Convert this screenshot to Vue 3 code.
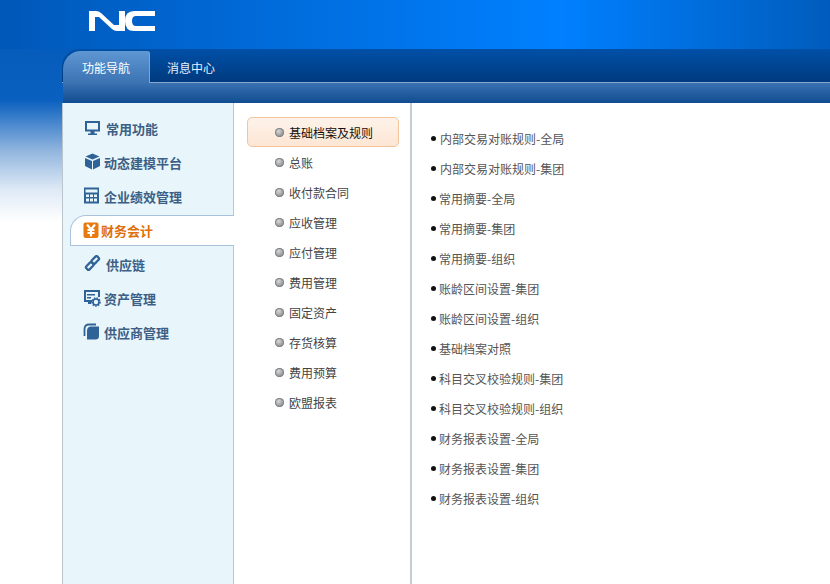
<script setup>
const navItems = [
  { key: 'monitor', label: '常用功能' },
  { key: 'cube', label: '动态建模平台' },
  { key: 'calc', label: '企业绩效管理' },
  { key: 'yen', label: '财务会计', active: true },
  { key: 'link', label: '供应链' },
  { key: 'asset', label: '资产管理' },
  { key: 'supplier', label: '供应商管理' }
]
const midItems = ['基础档案及规则', '总账', '收付款合同', '应收管理', '应付管理', '费用管理', '固定资产', '存货核算', '费用预算', '欧盟报表']
const rightItems = [
  '内部交易对账规则-全局', '内部交易对账规则-集团', '常用摘要-全局', '常用摘要-集团', '常用摘要-组织',
  '账龄区间设置-集团', '账龄区间设置-组织', '基础档案对照', '科目交叉校验规则-集团', '科目交叉校验规则-组织',
  '财务报表设置-全局', '财务报表设置-集团', '财务报表设置-组织'
]
</script>

<template>
  <div class="page">
    <header class="top">
      <svg class="logo" width="67" height="22" viewBox="0 0 67 22">
        <path fill="#fff" d="M0 21V1h7q3 0 5 2l13 12h5V1h6v20h-8q-3 0-5-2L10 7H6v14z" />
        <path fill="#fff" d="M66 1v5H47q-4 0-4 5t4 5h19v5H45q-9 0-9-10T45 1z" />
      </svg>
    </header>
    <div class="shell">
      <div class="tabs">
        <div class="tab on">功能导航</div>
        <div class="tab">消息中心</div>
      </div>
      <div class="subbar"></div>
      <div class="body">
        <aside class="side">
          <div v-for="n in navItems" :key="n.key" class="nav" :class="[n.key, { active: n.active }]">
            <svg class="ico" width="18" height="18" viewBox="0 0 18 18">
              <g v-if="n.key === 'monitor'">
                <path fill="#2f6296" fill-rule="evenodd" d="M1 2h15v10.500H1zM3 4v6.500h11V4zM6.500 12.500h4v2h2.500V16H4v-1.500h2.500z" />
              </g>
              <g v-else-if="n.key === 'cube'">
                <path fill="#2f6296" d="M8.500 .5l7 3-7 3-7-3zM1 5l7 3v8.500l-7-3.500zM16 5v8l-7 3.500V8z" />
              </g>
              <g v-else-if="n.key === 'calc'">
                <path fill="#2f6296" fill-rule="evenodd" d="M1 .5h15v16H1zM2.500 2.500v3h12v-3zM3 7.500v2.500h3V7.500zM7 7.500v2.500h3V7.500zM11 7.500v2.500h3V7.500zM3 11.500v3h3v-3zM7 11.500v3h3v-3zM11 11.500v3h3v-3z" />
              </g>
              <g v-else-if="n.key === 'yen'">
                <rect x="0.500" y="0.500" width="15" height="15.500" rx="2" fill="#e8790f" />
                <path fill="none" stroke="#fff" stroke-width="2.200" d="M4 2.500L8 7.500l4-5M8 7.500v7M4.500 8h7M4.500 11h7" />
              </g>
              <g v-else-if="n.key === 'link'">
                <g fill="none" stroke="#2f6296" stroke-width="2.200">
                  <rect x="9" y="1" width="4.500" height="8" rx="1.500" transform="rotate(45 11.250 5)" />
                  <rect x="3.500" y="7" width="4.500" height="8" rx="1.500" transform="rotate(45 5.750 11)" />
                </g>
              </g>
              <g v-else-if="n.key === 'asset'">
                <path fill="none" stroke="#2f6296" stroke-width="2" d="M9 12H2V2h14v6" />
                <path fill="#2f6296" d="M5 12h3v3H5zM4 5h8v1.500H4zM4 8h4v1.500H4z" />
                <circle cx="13" cy="13" r="3" fill="none" stroke="#2f6296" stroke-width="1.600" />
                <circle cx="13" cy="13" r="4" fill="none" stroke="#2f6296" stroke-width="1.600" stroke-dasharray="1.500 1.200" />
              </g>
              <g v-else>
                <path fill="none" stroke="#2f6296" stroke-width="1.800" d="M1.500 13V6q0-4.500 4.500-4.500h7" />
                <path fill="#2f6296" d="M8 3.500h8V13q0 3.500-3.500 3.500H4V8q0-4.500 4-4.500z" />
              </g>
            </svg>
            <span class="lbl">{{ n.label }}</span>
          </div>
        </aside>
        <section class="mid">
          <div v-for="(m, i) in midItems" :key="m" class="row" :class="{ sel: i === 0 }">
            <i class="dot"></i>{{ m }}
          </div>
        </section>
        <section class="right">
          <div v-for="(r, i) in rightItems" :key="r" class="leaf" :class="{ wide: i < 2 }">
            <i class="pip"></i>{{ r }}
          </div>
        </section>
      </div>
    </div>
  </div>
</template>

<style>
html, body { margin: 0; background: #fff; overflow: hidden; }
</style>

<style scoped>
.page {
  width: 830px;
  height: 584px;
  overflow: hidden;
  font-family: "Noto Sans CJK SC", "Liberation Sans", sans-serif;
  font-size: 12px;
  background: linear-gradient(180deg, #0058b8 0, #0a60bf 100px, #8fb4de 150px, #dfeaf6 190px, #fff 222px);
}
.top {
  height: 49px;
  box-sizing: border-box;
  padding: 10px 0 0 89px;
  background: linear-gradient(90deg, #0058b8 0, #0080ff 560px, #005cbc 830px);
}
.logo { display: block; }
.shell {
  margin-left: 62px;
  height: 535px;
  display: flex;
  flex-direction: column;
}
.tabs {
  height: 34px;
  box-sizing: border-box;
  padding-top: 2px;
  display: flex;
  background: linear-gradient(180deg, #0050a8 0, #003a7e 100%);
  border-bottom: 1px solid #86a6ce;
  border-top-left-radius: 18px;
}
.tab {
  width: 82px;
  text-align: center;
  line-height: 33px;
  color: #e8f0fa;
}
.tab.on {
  width: 87px;
  margin-left: 1px;
  height: 33px;
  color: #fff;
  border-radius: 18px 3px 0 0;
  background: linear-gradient(180deg, #5f97d3 0, #3a72b2 100%);
  border-right: 1px solid #7fa4d0;
  box-sizing: border-box;
}
.subbar {
  height: 20px;
  margin-left: 1px;
  background: linear-gradient(180deg, #3a72b2 0, #104c90 100%);
}
.body {
  flex: 1;
  display: flex;
  background: #fff;
  min-height: 0;
}
.side {
  width: 172px;
  box-sizing: border-box;
  padding-top: 8px;
  background: #e8f6fc;
  border-left: 1px solid #b9c4cc;
  border-right: 1px solid #b4c8de;
}
.nav {
  height: 34px;
  display: flex;
  align-items: center;
  padding-left: 21px;
  font-size: 13px;
  font-weight: 700;
  color: #3d5f85;
}
.ico { flex: none; }
.lbl { margin-left: 4px; }
.cube .lbl { margin-left: 2px; }
.calc { padding-left: 20px; }
.calc .lbl { margin-left: 3px; }
.asset { padding-left: 20px; }
.asset .lbl { margin-left: 3px; }
.supplier { padding-left: 20px; }
.supplier .lbl { margin-left: 3px; }
.nav.active {
  height: 31px;
  margin: 2px -1px 1px 7px;
  box-sizing: border-box;
  padding-left: 12px;
  background: #fff;
  color: #e0700c;
  border: 1px solid #a9c3dc;
  border-right: 0;
  border-top-left-radius: 16px;
}
.nav.active .lbl { margin-left: 0; }
.mid {
  width: 178px;
  box-sizing: border-box;
  padding: 14px 11px 0 13px;
  border-right: 2px solid #c4ccd4;
}
.row {
  height: 30px;
  display: flex;
  align-items: center;
  padding-left: 28px;
  color: #444;
  box-sizing: border-box;
}
.row.sel {
  color: #111;
  border: 1px solid #f3c39a;
  border-radius: 5px;
  padding-left: 27px;
  background: linear-gradient(180deg, #fdf3ea 0, #fde6d4 100%);
}
.dot {
  width: 9px;
  height: 9px;
  border-radius: 50%;
  margin-right: 5px;
  flex: none;
  background: radial-gradient(circle at 40% 35%, #d8d8d8, #8e8e8e 70%);
  box-shadow: inset 0 0 0 1px #80868c;
}
.right {
  flex: 1;
  padding: 20px 0 0 19px;
}
.leaf {
  height: 30px;
  display: flex;
  align-items: center;
  color: #555;
}
.pip {
  width: 5px;
  height: 5px;
  border-radius: 50%;
  background: #111;
  margin-right: 3px;
  flex: none;
}
.leaf.wide .pip { margin-right: 4px; }
</style>
